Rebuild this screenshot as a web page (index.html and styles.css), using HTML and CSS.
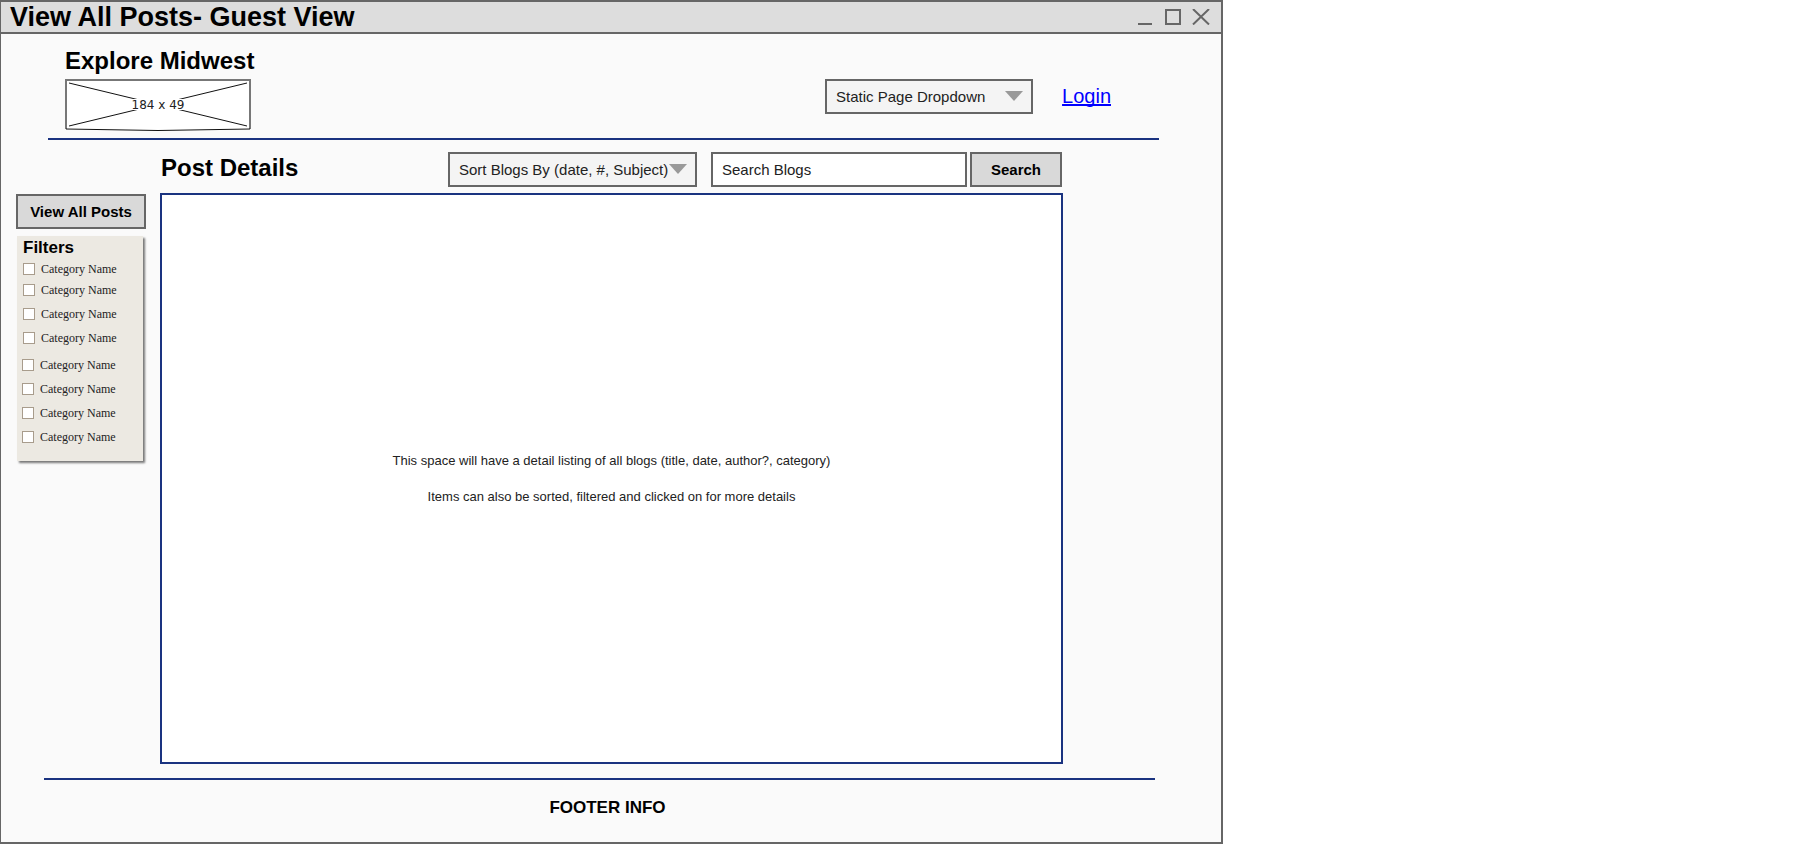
FILE: index.html
```html
<!DOCTYPE html>
<html lang="en">
<head>
<meta charset="utf-8">
<title>View All Posts- Guest View</title>
<link rel="stylesheet" href="styles.css">
</head>
<body>
<div class="window">
  <header class="titlebar">
    <h1 class="titlebar-title">View All Posts- Guest View</h1>
    <svg class="titlebar-icons" width="72" height="16" viewBox="0 0 72 16" fill="none" stroke="#666" stroke-width="2" aria-hidden="true">
      <path d="M0 15H14"/>
      <rect x="28" y="1" width="14" height="14"/>
      <path d="M55 0L71 15.5M71 0L55 15.5"/>
    </svg>
  </header>

  <div class="site-header">
    <div class="brand">
      <h2 class="heading">Explore Midwest</h2>
      <svg class="logo" width="186" height="52" viewBox="0 0 186 52" role="img" aria-label="184 x 49">
        <path d="M1 1H185V50Q93 53 1 50Z" fill="#fff"/>
        <path d="M1 50V1H185V50" fill="none" stroke="#777" stroke-width="2"/>
        <path d="M1 50Q93 53 185 50" fill="none" stroke="#111"/>
        <path d="M4 4L182 47M182 4L4 47" stroke="#111"/>
        <rect x="58" y="20" width="70" height="11" fill="#fff"/>
        <text class="logo-text" x="93" y="30" text-anchor="middle">184 x 49</text>
      </svg>
    </div>
    <nav class="site-nav">
      <div class="dropdown dropdown-pages">
        <select class="field" aria-label="Static pages"><option>Static Page Dropdown</option></select>
        <svg class="arrow" width="18" height="10" viewBox="0 0 18 10" aria-hidden="true"><path d="M0 0H18L9 10Z" fill="#999"/></svg>
      </div>
      <a class="login" href="#login">Login</a>
    </nav>
  </div>

  <div class="main">
    <aside class="sidebar">
      <button class="button button-all" type="button">View All Posts</button>
      <section class="filters">
        <h3 class="filters-title">Filters</h3>
        <div class="filter-group">
          <label class="filter filter-first"><input class="check" type="checkbox">Category Name</label>
          <label class="filter"><input class="check" type="checkbox">Category Name</label>
          <label class="filter"><input class="check" type="checkbox">Category Name</label>
          <label class="filter"><input class="check" type="checkbox">Category Name</label>
        </div>
        <div class="filter-group filter-group-more">
          <label class="filter"><input class="check" type="checkbox">Category Name</label>
          <label class="filter"><input class="check" type="checkbox">Category Name</label>
          <label class="filter"><input class="check" type="checkbox">Category Name</label>
          <label class="filter"><input class="check" type="checkbox">Category Name</label>
        </div>
      </section>
    </aside>

    <main class="posts">
      <div class="toolbar">
        <h2 class="heading toolbar-title">Post Details</h2>
        <div class="dropdown dropdown-sort">
          <select class="field" aria-label="Sort blogs"><option>Sort Blogs By (date, #, Subject)</option></select>
          <svg class="arrow" width="18" height="10" viewBox="0 0 18 10" aria-hidden="true"><path d="M0 0H18L9 10Z" fill="#999"/></svg>
        </div>
        <form class="search">
          <input class="field search-input" type="text" value="Search Blogs" aria-label="Search blogs">
          <button class="button button-search" type="button">Search</button>
        </form>
      </div>
      <div class="listing">
        <p class="note">This space will have a detail listing of all blogs (title, date, author?, category)</p>
        <p class="note">Items can also be sorted, filtered and clicked on for more details</p>
      </div>
    </main>
  </div>

  <footer class="footer">FOOTER INFO</footer>
</div>
</body>
</html>
```
FILE: styles.css
```css
* { box-sizing: border-box; }
body {
  margin: 0;
  background: #fff;
  color: #000;
  font-family: "Liberation Sans", Arial, sans-serif;
}
h1, h2, h3, p { margin: 0; }

.window {
  max-width: 1223px;
  border: 2px solid #666;
  border-left-width: 1px;
  background: #fafafa;
}

.titlebar {
  display: flex;
  align-items: center;
  justify-content: space-between;
  height: 32px;
  padding: 0 11px 0 9px;
  border-bottom: 2px solid #666;
  background: #ddd;
}
.titlebar-title { font-size: 27px; line-height: 30px; }

.heading { font-size: 24px; line-height: 28px; }

.site-header {
  display: flex;
  justify-content: space-between;
  margin: 0 62px 0 47px;
  padding: 13px 48px 7px 17px;
  border-bottom: 2px solid #1a3380;
}
.brand { display: flex; flex-direction: column; gap: 4px; }
.logo { display: block; }
.logo-text { font: 12px "DejaVu Sans", sans-serif; fill: #222; }
.site-nav {
  display: flex;
  align-items: flex-start;
  gap: 29px;
  padding-top: 32px;
}
.login {
  color: #00f;
  font-size: 20px;
  line-height: 34px;
  text-decoration: underline 2px;
  text-decoration-skip-ink: none;
}

.field {
  width: 100%;
  height: 35px;
  padding: 0 9px;
  border: 2px solid #666;
  border-radius: 0;
  background: #f4f4f4;
  color: #222;
  font: 15px "Liberation Sans", Arial, sans-serif;
  appearance: none;
}
.dropdown { position: relative; }
.dropdown-pages { width: 208px; }
.dropdown-sort { width: 249px; }
.arrow {
  position: absolute;
  top: 12px;
  right: 10px;
  pointer-events: none;
}

.button {
  height: 35px;
  padding: 0;
  border: 2px solid #666;
  background: #d9d9d9;
  color: #000;
  font: bold 15px "Liberation Sans", Arial, sans-serif;
}
.button-all { width: 130px; }
.button-search { width: 92px; }

.main {
  display: flex;
  gap: 14px;
  padding: 12px 158px 0 15px;
}
.sidebar { width: 130px; padding-top: 42px; }
.posts { flex: 1; }

.toolbar {
  display: flex;
  align-items: flex-start;
  gap: 14px;
  height: 41px;
  padding: 0 1px;
}
.toolbar-title { flex: 1; padding-top: 2px; }
.search { display: flex; gap: 3px; }
.search-input { width: 256px; background: #fff; }

.filters {
  width: 126px;
  margin: 7px 0 0 1px;
  padding: 2px 0 12px 5px;
  background: #ece9e2;
  box-shadow: 2px 2px 2px #777;
}
.filters-title { padding-left: 1px; font-size: 17px; line-height: 20px; }
.filter-group { padding: 2px 0 0 1px; }
.filter-group-more { padding: 3px 0 0; }
.filter {
  display: flex;
  align-items: center;
  gap: 6px;
  height: 24px;
  color: #222;
  font: 12px "Liberation Serif", "Times New Roman", serif;
}
.filter-first { height: 18px; }
.check {
  width: 12px;
  height: 12px;
  margin: 0;
  border: 1px solid #a89c8c;
  background: #fff;
  appearance: none;
}

.listing {
  display: flex;
  flex-direction: column;
  align-items: center;
  justify-content: center;
  gap: 18px;
  min-height: 571px;
  border: 2px solid #1a3380;
  background: #fff;
}
.note { color: #222; font-size: 13px; line-height: 18px; }

.footer {
  margin: 14px 66px 0 43px;
  padding: 18px 0 24px 16px;
  border-top: 2px solid #1a3380;
  font-size: 17px;
  font-weight: bold;
  line-height: 20px;
  text-align: center;
}
```
